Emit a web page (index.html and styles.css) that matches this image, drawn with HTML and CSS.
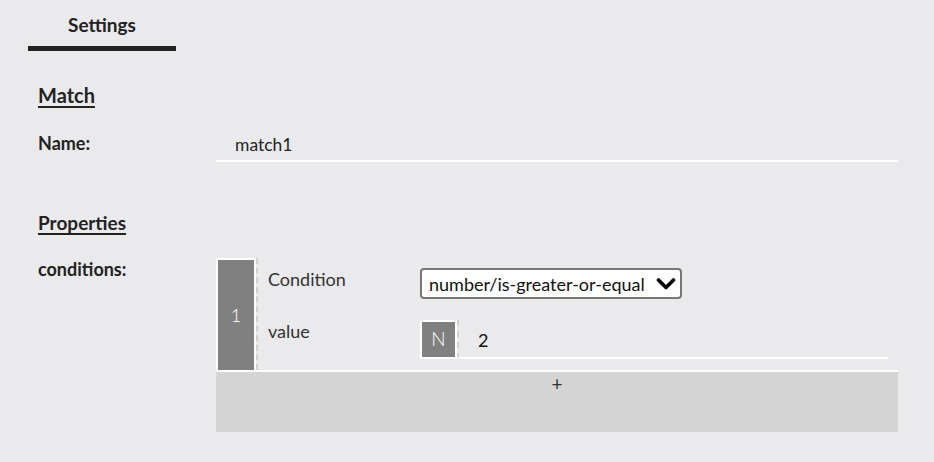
FILE: index.html
```html
<!DOCTYPE html>
<html>
<head>
<meta charset="utf-8">
<link rel="stylesheet" href="styles.css">
</head>
<body>
<div class="tabs">
  <div class="tab active">Settings</div>
</div>
<div class="panel">
  <h2 class="section">Match</h2>
  <div class="row name-row">
    <div class="label">Name:</div>
    <div class="text-field"><span>match1</span></div>
  </div>
  <h2 class="section props">Properties</h2>
  <div class="row cond-row">
    <div class="label">conditions:</div>
    <div class="list">
      <div class="item">
        <div class="index">1</div>
        <div class="item-body">
          <div class="prop">
            <div class="prop-label">Condition</div>
            <div class="select">
              <span>number/is-greater-or-equal</span>
              <svg class="chev" width="20" height="14" viewBox="0 0 20 14"><path d="M2.5 3 L10 10.5 L17.5 3" fill="none" stroke="#000" stroke-width="3.6" stroke-linecap="round" stroke-linejoin="round"/></svg>
            </div>
          </div>
          <div class="prop">
            <div class="prop-label">value</div>
            <div class="value-field">
              <div class="type">N</div>
              <div class="value">2</div>
            </div>
          </div>
        </div>
      </div>
      <div class="add">+</div>
    </div>
  </div>
</div>
</body>
</html>
```
FILE: styles.css
```css
* { box-sizing: border-box; }
html, body { margin: 0; padding: 0; }
body {
  background: #eaeaec;
  font-family: Lato, "Open Sans", sans-serif;
  color: #222;
  width: 934px;
  height: 462px;
  overflow: hidden;
}
.tabs {
  display: flex;
  padding-left: 28px;
}
.tab {
  width: 148px;
  height: 51px;
  padding-top: 13px;
  text-align: center;
  font-weight: 700;
  font-size: 19px;
  line-height: 24px;
  border-bottom: 5px solid #222;
}
.panel {
  padding-left: 38px;
  padding-right: 36px;
}
.section {
  margin: 0;
  font-size: 20px;
  font-weight: 700;
  line-height: 24px;
  text-decoration: underline;
  text-underline-offset: 3px;
  text-decoration-thickness: 2px;
  padding-top: 32px;
  color: #222;
}
.section.props {
  font-size: 19px;
  padding-top: 49px;
}
.row {
  display: flex;
}
.label {
  width: 178px;
  flex: none;
  font-weight: 700;
  font-size: 18px;
  line-height: 20px;
}
.name-row {
  margin-top: 16px;
}
.name-row .label { padding-top: 10px; }
.text-field {
  flex: 1;
  height: 39px;
  padding: 12px 0 0 19px;
  border-bottom: 2px solid #fff;
  font-size: 17.5px;
  line-height: 20px;
}
.cond-row {
  margin-top: 23px;
}
.cond-row .label { padding-top: 1px; }
.list {
  flex: 1;
  display: flex;
  flex-direction: column;
}
.item {
  display: flex;
  height: 114px;
  border-bottom: 2px solid #fff;
}
.index {
  width: 40px;
  flex: none;
  background: #808080;
  border: 2px solid #fff;
  border-bottom: none;
  color: #fff;
  font-size: 18px;
  font-weight: 300;
  display: flex;
  align-items: center;
  justify-content: center;
}
.item-body {
  flex: 1;
  border-left: 2px dashed #d0d0d0;
  padding: 10px 10px 0 10px;
  display: flex;
  flex-direction: column;
  gap: 21px;
}
.prop {
  display: flex;
}
.prop-label {
  width: 152px;
  flex: none;
  font-size: 18px;
  line-height: 20px;
  padding-top: 1px;
  color: #333;
}
.select {
  width: 262px;
  height: 31px;
  background: #fff;
  border: 2px solid #777;
  border-radius: 4px;
  display: flex;
  align-items: center;
  justify-content: space-between;
  padding: 0 4px 0 7px;
  font-size: 18px;
  color: #111;
}
.chev { flex: none; }
.value-field {
  flex: 1;
  display: flex;
  align-items: flex-start;
}
.type {
  width: 37px;
  height: 39px;
  flex: none;
  background: #808080;
  border: 2px solid #fff;
  color: #fff;
  font-size: 19px;
  font-weight: 300;
  display: flex;
  align-items: center;
  justify-content: center;
  padding-bottom: 2px;
}
.value {
  flex: 1;
  height: 39px;
  border-left: 2px dashed #d0d0d0;
  border-bottom: 2px solid #fff;
  padding: 10px 0 0 19px;
  font-size: 18px;
  line-height: 20px;
  color: #111;
}
.add {
  height: 60px;
  background: #d4d4d4;
  text-align: center;
  font-size: 19px;
  line-height: 24px;
  color: #333;
}
```
